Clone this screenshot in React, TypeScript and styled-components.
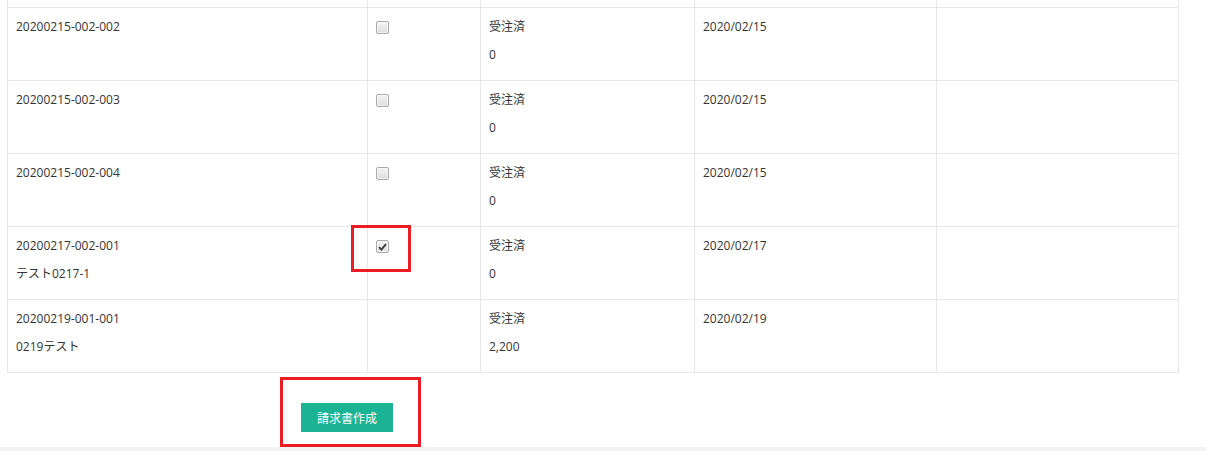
import React from "react";
import styled, { createGlobalStyle } from "styled-components";

const GlobalStyle = createGlobalStyle`
  html, body {
    margin: 0;
    padding: 0;
    background: #f3f3f4;
  }
  body {
    font-family: "Open Sans", "Noto Sans CJK JP", sans-serif;
    font-size: 12px;
    color: #333;
  }
`;

interface Order {
  code: string;
  name?: string;
  checkbox: "none" | "off" | "on";
  highlight?: boolean;
  status: string;
  amount: string;
  date: string;
}

const orders: Order[] = [
  { code: "20200215-002-002", checkbox: "off", status: "受注済", amount: "0", date: "2020/02/15" },
  { code: "20200215-002-003", checkbox: "off", status: "受注済", amount: "0", date: "2020/02/15" },
  { code: "20200215-002-004", checkbox: "off", status: "受注済", amount: "0", date: "2020/02/15" },
  {
    code: "20200217-002-001",
    name: "テスト0217-1",
    checkbox: "on",
    highlight: true,
    status: "受注済",
    amount: "0",
    date: "2020/02/17",
  },
  {
    code: "20200219-001-001",
    name: "0219テスト",
    checkbox: "none",
    status: "受注済",
    amount: "2,200",
    date: "2020/02/19",
  },
];

function App() {
  return (
    <>
      <GlobalStyle />
      <Page>
        <Table>
          <colgroup>
            <col style={{ width: 360 }} />
            <col style={{ width: 113 }} />
            <col style={{ width: 214 }} />
            <col style={{ width: 242 }} />
            <col style={{ width: 242 }} />
          </colgroup>
          <tbody>
            <StubRow>
              <td />
              <td />
              <td />
              <td />
              <td />
            </StubRow>
            {orders.map((o) => (
              <tr key={o.code}>
                <Cell>
                  <Line>{o.code}</Line>
                  {o.name && <Line>{o.name}</Line>}
                </Cell>
                <Cell>
                  {o.checkbox !== "none" && (
                    <CheckWrap>
                      <Check $checked={o.checkbox === "on"}>
                        {o.checkbox === "on" && (
                          <svg width="9" height="8" viewBox="0 0 9 8">
                            <path
                              d="M1 4.2 L3.4 6.6 L8 1.2"
                              fill="none"
                              stroke="#3a3a3a"
                              strokeWidth="1.9"
                            />
                          </svg>
                        )}
                      </Check>
                      {o.highlight && <Marker $w={60} $h={47} $x={-25} $y={-15} />}
                    </CheckWrap>
                  )}
                </Cell>
                <Cell>
                  <Line>{o.status}</Line>
                  <Line>{o.amount}</Line>
                </Cell>
                <Cell>
                  <Line>{o.date}</Line>
                </Cell>
                <Cell />
              </tr>
            ))}
          </tbody>
        </Table>
        <Footer>
          <ButtonFrame>
            <PrimaryButton>請求書作成</PrimaryButton>
          </ButtonFrame>
        </Footer>
      </Page>
    </>
  );
}

const Page = styled.div`
  background: #fff;
  padding-left: 7px;
  height: 447px;
  box-sizing: border-box;
  overflow: hidden;
`;

const Table = styled.table`
  width: 1171px;
  border-collapse: collapse;
  table-layout: fixed;

  td {
    border: 1px solid #e7e7e7;
  }
`;

const StubRow = styled.tr`
  td {
    height: 7px;
    padding: 0;
    border-top: none;
  }
`;

const Cell = styled.td`
  padding: 10px 8px 6px;
  vertical-align: top;
  height: 56px;
  line-height: 18px;
`;

const Line = styled.p`
  margin: 0 0 10px;
  line-height: 18px;
  white-space: nowrap;
`;

const CheckWrap = styled.span`
  position: relative;
  display: inline-block;
  margin-top: 3px;
`;

const Check = styled.span<{ $checked: boolean }>`
  display: flex;
  align-items: center;
  justify-content: center;
  width: 11px;
  height: 11px;
  border: 1px solid #a9a9a9;
  border-radius: 2px;
  background: linear-gradient(#f4f4f4, #dcdcdc);
  box-shadow: inset 0 0 0 1px rgba(255, 255, 255, 0.6);
`;

const Marker = styled.span<{ $w: number; $h: number; $x: number; $y: number }>`
  position: absolute;
  left: ${(p) => p.$x}px;
  top: ${(p) => p.$y}px;
  width: ${(p) => p.$w}px;
  height: ${(p) => p.$h}px;
  box-sizing: border-box;
  border: 3px solid #ec1c24;
  pointer-events: none;
`;

const Footer = styled.div`
  padding-left: 273px;
  margin-top: 4px;
`;

const ButtonFrame = styled.div`
  display: inline-block;
  border: 3px solid #ec1c24;
  padding: 23px 25px 12px 18px;
`;

const PrimaryButton = styled.button`
  display: block;
  width: 92px;
  height: 29px;
  border: none;
  border-radius: 0;
  background: #1ab394;
  color: #fff;
  font-family: "Open Sans", "Noto Sans CJK JP", sans-serif;
  font-size: 12px;
  padding: 0;
  cursor: pointer;
`;

export default App;
